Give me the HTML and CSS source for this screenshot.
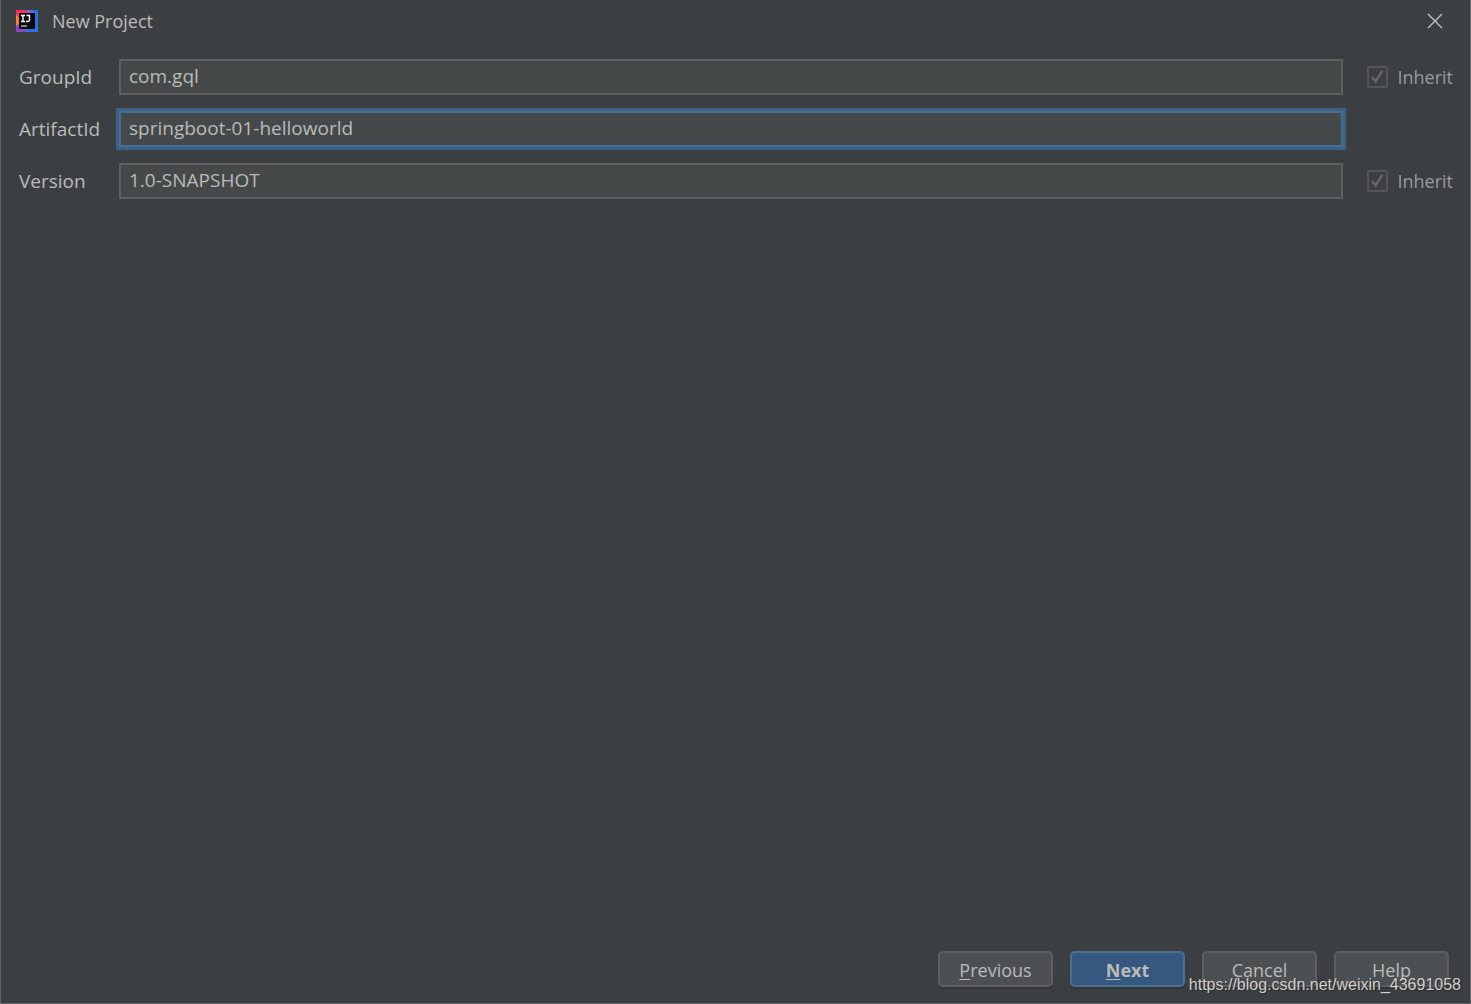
FILE: index.html
```html
<!DOCTYPE html>
<html lang="en">
<head>
<meta charset="utf-8">
<title>New Project</title>
<link rel="stylesheet" href="styles.css">
</head>
<body>
<main class="dialog">
  <header class="titlebar">
    <svg class="logo" viewBox="0 0 22 22" aria-hidden="true">
      <rect width="22" height="22" fill="#2f6fe4"/>
      <path d="M0 0h14L4 11H0z" fill="#f5325c"/>
      <path d="M0 5l5 4v8l-5 3z" fill="#f58529"/>
      <path d="M0 16l5-3 5 9H0z" fill="#8a45c9"/>
      <path d="M10 0h5l4 4h-9z" fill="#8b5bd6"/>
      <rect x="3" y="3" width="16" height="16" fill="#0a0a0c"/>
      <path d="M5 5.500h4M7 5.500v6M5 11.500h4M10.500 5.500h3v4q0 2-1.500 2h-2" fill="none" stroke="#fff" stroke-width="1.400"/>
      <path d="M5 16h6" stroke="#bbb" stroke-width="1.400"/>
    </svg>
    <h1 class="title">New Project</h1>
    <button class="close" type="button" aria-label="Close">
      <svg viewBox="0 0 16 16" width="16" height="16"><path d="M1 1l14 14M15 1L1 15" stroke="#bfc1c2" stroke-width="1.400"/></svg>
    </button>
  </header>
  <form class="form">
    <div class="fields">
      <label class="name" for="group">GroupId</label>
      <input class="field" id="group" type="text" value="com.gql">
      <label class="inherit"><input class="check" type="checkbox" checked disabled>Inherit</label>

      <label class="name" for="artifact">ArtifactId</label>
      <input class="field active" id="artifact" type="text" value="springboot-01-helloworld">
      <span></span>

      <label class="name" for="version">Version</label>
      <input class="field" id="version" type="text" value="1.0-SNAPSHOT">
      <label class="inherit"><input class="check" type="checkbox" checked disabled>Inherit</label>
    </div>
    <footer class="actions">
      <button class="btn" type="button"><u>P</u>revious</button>
      <button class="btn primary" type="button"><u>N</u>ext</button>
      <button class="btn" type="button">Cancel</button>
      <button class="btn" type="button">Help</button>
    </footer>
  </form>
  <p class="watermark">https://blog.csdn.net/weixin_43691058</p>
</main>
</body>
</html>
```
FILE: styles.css
```css
* { box-sizing: border-box; }

body {
  margin: 0;
  background: #3c3f41;
  color: #bbbbbb;
  font: 18px/26px "Open Sans", "Noto Sans", sans-serif;
}

.dialog {
  position: relative;
  display: flex;
  flex-direction: column;
  min-height: 100vh;
  border: 1px solid #626466;
  border-top: 0;
}

.titlebar {
  display: flex;
  align-items: center;
  height: 42px;
  padding: 0 27px 0 15px;
}

.logo { width: 22px; height: 22px; }

.title {
  flex: 1;
  margin: 0 0 0 14px;
  font-size: 18px;
  font-weight: 400;
}

.close {
  display: flex;
  padding: 0;
  border: 0;
  background: none;
}

.form {
  display: flex;
  flex: 1;
  flex-direction: column;
  justify-content: space-between;
  padding: 17px 17px 16px;
}

.fields {
  display: grid;
  grid-template-columns: 83px 1fr 93px;
  column-gap: 17px;
  row-gap: 16px;
  align-items: center;
  padding-left: 1px;
}

.name { font-size: 19px; }

.field {
  width: 100%;
  height: 36px;
  padding: 0 8px 2px;
  border: 2px solid #5f6161;
  outline: 0;
  background: #45494a;
  color: #bbbbbb;
  font: inherit;
  font-size: 19px;
}

.active {
  border-color: #466d94;
  box-shadow: 0 0 0 3px #3d6185;
}

.inherit {
  display: flex;
  align-items: center;
  gap: 9px;
  margin-left: 7px;
  color: #999999;
}

.check {
  appearance: none;
  width: 22px;
  height: 22px;
  margin: 0;
  border: 2px solid #545657;
  border-radius: 3px;
  background: url("data:image/svg+xml,%3Csvg xmlns='http://www.w3.org/2000/svg' viewBox='0 0 18 18'%3E%3Cpath d='M3.500 9.500l3.500 4L14 3' fill='none' stroke='%23646667' stroke-width='2.500'/%3E%3C/svg%3E");
}

.actions {
  display: flex;
  justify-content: flex-end;
  gap: 17px;
  padding-right: 4px;
}

.btn {
  width: 115px;
  height: 36px;
  padding: 2px 0 0;
  border: 2px solid #5e6060;
  border-radius: 5px;
  background: #4c5052;
  box-shadow: 0 2px 1px #343739;
  color: #bbbbbb;
  font: inherit;
}

.btn u { text-underline-offset: 2px; }

.primary {
  border-color: #4c708c;
  background: #365880;
  font-weight: 700;
}

.watermark {
  position: absolute;
  right: 9px;
  bottom: 8px;
  margin: 0;
  color: #d0d0d0;
  font: 16px/20px "Liberation Sans", Arial, sans-serif;
  text-shadow: 1px 1px 1px #2a2a2a;
}
```
